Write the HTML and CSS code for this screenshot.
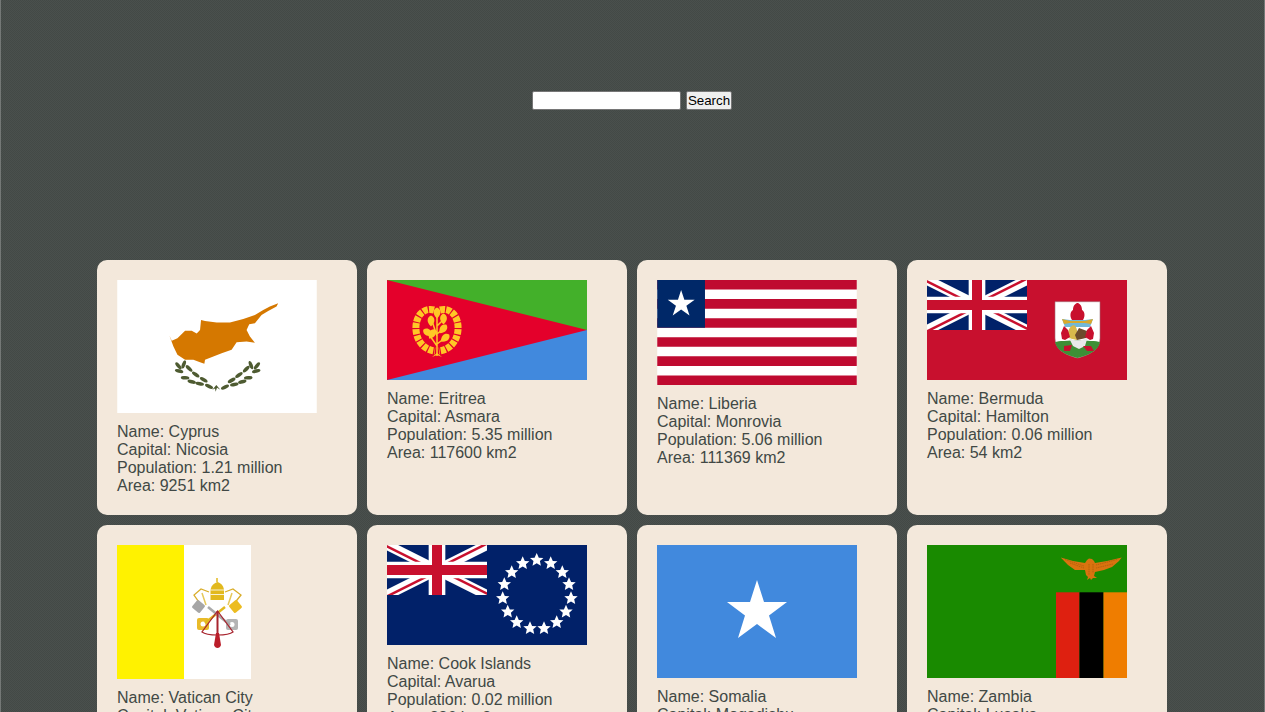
FILE: index.html
```html
<!DOCTYPE html>
<html lang="en">
<head>
<meta charset="utf-8">
<title>Countries</title>
<link rel="stylesheet" href="styles.css">
</head>
<body>
<svg class="defs" width="0" height="0" aria-hidden="true">
  <defs>
    <clipPath id="uj-clip"><path d="M30 15 H60 V30Z V30 H0Z H0 V0Z V0 H60Z"/></clipPath>
    <symbol id="union-jack" viewBox="0 0 60 30" preserveAspectRatio="none">
      <rect width="60" height="30" fill="#012169"/>
      <path d="M0 0 L60 30 M60 0 L0 30" stroke="#fff" stroke-width="6"/>
      <path d="M0 0 L60 30 M60 0 L0 30" stroke="#c8102e" stroke-width="3" clip-path="url(#uj-clip)"/>
      <path d="M30 0 V30 M0 15 H60" stroke="#fff" stroke-width="10"/>
      <path d="M30 0 V30 M0 15 H60" stroke="#c8102e" stroke-width="6"/>
    </symbol>
    <path id="ck-star" d="M0 -7 L2.100 -2.300 L6.700 -2.100 L3.200 1 L4.200 5.700 L0 3.200 L-4.200 5.700 L-3.200 1 L-6.700 -2.100 L-2.100 -2.300Z" fill="#fff"/>
    <ellipse id="cy-leaf" rx="6.500" ry="2.700" fill="#4e5b31"/>
    <path id="er-leaf" d="M0 -5.500 C4 -4 5 1 0 5.500 C-5 1 -4 -4 0 -5.500Z" fill="#ffc726"/>
  </defs>
</svg>
<div class="page">
  <header class="search-area">
    <form class="search-form">
      <input class="search-input" type="text" aria-label="Search">
      <button class="search-button" type="button">Search</button>
    </form>
  </header>
  <main class="grid">

    <article class="card">
      <svg class="flag" width="200" height="133" viewBox="0 0 300 200">
        <rect width="300" height="200" fill="#fff"/>
        <path d="M78.500 84 L82 91.500 L90.500 87.500 L102 76.500 L112 76.500 L119.500 80.500 L124.500 75 L126 60 L132 61.500 L149.500 64 L169.500 64 L189.500 58.500 L207 52.500 L219.500 45 L229.500 40 L242 35 L239.500 40 L227 46.500 L217 52.500 L207 65 L198.500 66.500 L194.500 75 L199.500 85 L207 94.500 L194.500 92.500 L179.500 93.500 L172 105 L157 110 L144.500 115 L132 120 L131 126 L124.500 123.500 L114.500 120 L102 120 L90.500 112.500 L84.500 100Z" fill="#d57800"/>
        <g>
          <use href="#cy-leaf" transform="translate(92 129) rotate(50)"/>
          <use href="#cy-leaf" transform="translate(100 127) rotate(-70)"/>
          <use href="#cy-leaf" transform="translate(93 137) rotate(15)"/>
          <use href="#cy-leaf" transform="translate(108 133) rotate(45)"/>
          <use href="#cy-leaf" transform="translate(102 147) rotate(5)"/>
          <use href="#cy-leaf" transform="translate(118 142) rotate(35)"/>
          <use href="#cy-leaf" transform="translate(112 153) rotate(15)"/>
          <use href="#cy-leaf" transform="translate(130 150) rotate(30)"/>
          <use href="#cy-leaf" transform="translate(124 156) rotate(10)"/>
          <use href="#cy-leaf" transform="translate(138 160) rotate(25)"/>
          <use href="#cy-leaf" transform="translate(210 129) rotate(-50)"/>
          <use href="#cy-leaf" transform="translate(201 128) rotate(70)"/>
          <use href="#cy-leaf" transform="translate(209 137) rotate(-15)"/>
          <use href="#cy-leaf" transform="translate(194 134) rotate(-45)"/>
          <use href="#cy-leaf" transform="translate(197 147) rotate(-5)"/>
          <use href="#cy-leaf" transform="translate(183 143) rotate(-35)"/>
          <use href="#cy-leaf" transform="translate(188 153) rotate(-15)"/>
          <use href="#cy-leaf" transform="translate(172 151) rotate(-30)"/>
          <use href="#cy-leaf" transform="translate(176 157) rotate(-10)"/>
          <use href="#cy-leaf" transform="translate(162 161) rotate(-25)"/>
          <path d="M143 165 L149 158 L155 165 L150 162 L148 168 L147 163Z" fill="#4e5b31"/>
        </g>
      </svg>
      <div class="info">
        <div>Name: Cyprus</div>
        <div>Capital: Nicosia</div>
        <div>Population: 1.21 million</div>
        <div>Area: 9251 km2</div>
      </div>
    </article>

    <article class="card">
      <svg class="flag" width="200" height="100" viewBox="0 0 200 100">
        <rect width="200" height="50" fill="#43b02a"/>
        <rect y="50" width="200" height="50" fill="#4189dd"/>
        <path d="M0 0 L200 50 L0 100Z" fill="#e4002b"/>
        <g fill="none" stroke="#ffc726">
          <path d="M47 30 C36 27 28 37 29 50 C30 62 38 70 48 71" stroke-width="7" stroke-dasharray="5 1.200"/>
          <path d="M53 30 C64 27 72 37 71 50 C70 62 62 70 52 71" stroke-width="7" stroke-dasharray="5 1.200"/>
          <path d="M50 76 V33 M50 66 L41 53 M50 64 L58 58 M50 56 L45 41 M50 54 L56 49 M50 46 L57 39" stroke-width="1.500"/>
        </g>
        <use href="#er-leaf" x="44" y="41"/>
        <use href="#er-leaf" x="56.500" y="39"/>
        <use href="#er-leaf" x="50" y="33"/>
        <use href="#er-leaf" transform="translate(41 52.500) rotate(-60)"/>
        <use href="#er-leaf" transform="translate(45 54) rotate(30)"/>
        <use href="#er-leaf" transform="translate(56 49) rotate(40)"/>
        <use href="#er-leaf" transform="translate(58 58) rotate(50)"/>
        <path d="M45 77 L50 73 L55 77 L50 75Z" fill="#ffc726"/>
      </svg>
      <div class="info">
        <div>Name: Eritrea</div>
        <div>Capital: Asmara</div>
        <div>Population: 5.35 million</div>
        <div>Area: 117600 km2</div>
      </div>
    </article>

    <article class="card">
      <svg class="flag" width="200" height="105" viewBox="0 0 209 110">
        <rect width="209" height="110" fill="#fff"/>
        <path d="M0 5 H209 M0 25 H209 M0 45 H209 M0 65 H209 M0 85 H209 M0 105 H209" stroke="#bf0a30" stroke-width="10"/>
        <rect width="50" height="50" fill="#002868"/>
        <path d="M25 10.500 L28.400 20.700 L39.200 20.700 L30.500 27 L33.800 37.100 L25 30.800 L16.200 37.100 L19.600 27 L11 20.700 L21.700 20.700Z" fill="#fff"/>
      </svg>
      <div class="info">
        <div>Name: Liberia</div>
        <div>Capital: Monrovia</div>
        <div>Population: 5.06 million</div>
        <div>Area: 111369 km2</div>
      </div>
    </article>

    <article class="card">
      <svg class="flag" width="200" height="100" viewBox="0 0 200 100">
        <rect width="200" height="100" fill="#c8102e"/>
        <use href="#union-jack" width="100" height="50"/>
        <path d="M128 21.700 H173 V58 C173 70 162 75 150.500 78 C139 75 128 70 128 58Z" fill="#fff" stroke="#a0707a" stroke-width=".6"/>
        <path d="M128 62 C135 60 166 60 173 62 C171 71 162 75 150.500 78 C139 75 130 71 128 62Z" fill="#3e8f36"/>
        <path d="M135 39 L143 40 H158 L166 39 L163 47 H138Z" fill="#72b8d8"/>
        <path d="M135 39 L143 41 H158 L166 39 L164 44 L158 43 H143 L137 44Z" fill="#d9a92c"/>
        <path d="M145 40 C142 35 144 31 146 30 C146 25 149 23 150.500 23 C152 23 155 25 155 30 C157 31 159 35 156 40Z" fill="#c8102e"/>
        <path d="M141 58 C140 50 143 46 147 45 C150 47 151 52 150 60Z" fill="#d9b84c"/>
        <path d="M148 55 L152 48 L160 51 L159 58 L150 60Z" fill="#6d4a2c"/>
        <path d="M141 56 C145 62 156 62 161 56 L158 66 L152 69 L146 66Z" fill="#e9e9e9"/>
        <path d="M134 53 L137 46 L141 50 L143 57 L138 60 L135 59Z M167 53 L164 46 L160 50 L158 57 L163 60 L166 59Z M137 66 L145 65 L143 71 L137 71Z M156 66 L164 66 L167 71 L160 71Z" fill="#c8102e"/>
      </svg>
      <div class="info">
        <div>Name: Bermuda</div>
        <div>Capital: Hamilton</div>
        <div>Population: 0.06 million</div>
        <div>Area: 54 km2</div>
      </div>
    </article>

    <article class="card">
      <svg class="flag" width="134" height="134" viewBox="0 0 134 134">
        <rect width="67" height="134" fill="#fff200"/>
        <rect x="67" width="67" height="134" fill="#fff"/>
        <path d="M100 33 V37" stroke="#e2b91e" stroke-width="1.500"/>
        <path d="M93.500 55 H107 V46 C107 41 104 38 100.500 37 C97 38 93.500 41 93.500 46Z" fill="#e2b91e"/>
        <path d="M93.500 45 H107 M93.500 49.500 H107" stroke="#fff" stroke-width=".8"/>
        <path d="M92 47 L84 44 L77 50 L84 60 M108 47 L116 44 L124 50 L116 60" fill="none" stroke="#d9ad2a" stroke-width="1.300"/>
        <path d="M85 48 L89 60 M115 48 L111 60" stroke="#e6c85a" stroke-width="1.500"/>
        <rect x="76.500" y="56.500" width="10" height="10" rx="1.500" fill="#a6a6a6" transform="rotate(40 81.500 61.500)"/>
        <rect x="113.500" y="56.500" width="10" height="10" rx="1.500" fill="#ecbc20" transform="rotate(-40 118.500 61.500)"/>
        <rect x="80" y="73" width="12" height="12" rx="2" fill="#e9bb2a"/>
        <rect x="109" y="74" width="12" height="11" rx="2" fill="#b4b4b4"/>
        <circle cx="86" cy="79" r="2.500" fill="#fff"/>
        <circle cx="115" cy="79.500" r="2.500" fill="#fff"/>
        <path d="M88 78 L108 62" stroke="#e2b91e" stroke-width="2.500"/>
        <path d="M91 62 L113 80" stroke="#aaa" stroke-width="2.500"/>
        <path d="M100.500 66 L85 87 C90 91 111 91 116 87 Z" fill="none" stroke="#a8242e" stroke-width="1.200"/>
        <path d="M100.500 66 V90" stroke="#a8242e" stroke-width="2"/>
        <path d="M99 88 H102 L104 100 C103 104 98 104 97 100Z" fill="#bb1e2a"/>
      </svg>
      <div class="info">
        <div>Name: Vatican City</div>
        <div>Capital: Vatican City</div>
        <div>Population: 0 million</div>
        <div>Area: 0.44 km2</div>
      </div>
    </article>

    <article class="card">
      <svg class="flag" width="200" height="100" viewBox="0 0 200 100">
        <rect width="200" height="100" fill="#012169"/>
        <use href="#union-jack" width="100" height="50"/>
        <use href="#ck-star" x="149.700" y="15"/>
        <use href="#ck-star" x="163.700" y="18.300"/>
        <use href="#ck-star" x="175.300" y="27.300"/>
        <use href="#ck-star" x="182" y="39.300"/>
        <use href="#ck-star" x="184" y="53.300"/>
        <use href="#ck-star" x="179" y="66.700"/>
        <use href="#ck-star" x="169.700" y="77.300"/>
        <use href="#ck-star" x="157" y="83.300"/>
        <use href="#ck-star" x="143" y="83.300"/>
        <use href="#ck-star" x="129.700" y="77.300"/>
        <use href="#ck-star" x="120.700" y="66.700"/>
        <use href="#ck-star" x="115.700" y="53.300"/>
        <use href="#ck-star" x="117.300" y="39.300"/>
        <use href="#ck-star" x="124.700" y="27.300"/>
        <use href="#ck-star" x="135.700" y="18.300"/>
      </svg>
      <div class="info">
        <div>Name: Cook Islands</div>
        <div>Capital: Avarua</div>
        <div>Population: 0.02 million</div>
        <div>Area: 236 km2</div>
      </div>
    </article>

    <article class="card">
      <svg class="flag" width="200" height="133" viewBox="0 0 200 133">
        <rect width="200" height="133" fill="#4189dd"/>
        <path d="M100 35 L107 57 L130 57 L112 70.500 L119 93 L100 79 L81 93 L88 70.500 L70 57 L93 57Z" fill="#fff"/>
      </svg>
      <div class="info">
        <div>Name: Somalia</div>
        <div>Capital: Mogadishu</div>
        <div>Population: 15.89 million</div>
        <div>Area: 637657 km2</div>
      </div>
    </article>

    <article class="card">
      <svg class="flag" width="200" height="133" viewBox="0 0 200 133">
        <rect width="200" height="133" fill="#198a00"/>
        <rect x="129" y="47.300" width="23.500" height="85.700" fill="#de2010"/>
        <rect x="152.500" y="47.300" width="24" height="85.700" fill="#000"/>
        <rect x="176.500" y="47.300" width="23.500" height="85.700" fill="#ef7d00"/>
        <path d="M133.700 12.500 L146 16 L158 18 L160 15 L162 13.500 L165 14 L167 16 L168 18 L180 16 L194.700 12.500 L192 16 L185 22 L177 25 L168 27 L167 31 L170 33 L166 33 L164 35 L163 33 L160 35 L161 32 L159 30 L158 25 L148 25 L141 20Z" fill="#d9730f"/>
        <path d="M138 14.500 L157 21 M143 18 L157 23 M190 14.500 L169 20 M186 19 L169 23 M162 19 V30 M166 19 V28" stroke="#a85a0c" stroke-width=".7" stroke-dasharray="1.500 .8" fill="none"/>
      </svg>
      <div class="info">
        <div>Name: Zambia</div>
        <div>Capital: Lusaka</div>
        <div>Population: 18.38 million</div>
        <div>Area: 752612 km2</div>
      </div>
    </article>

  </main>
</div>
</body>
</html>
```

FILE: styles.css
```css
html, body {
  margin: 0;
  padding: 0;
  height: 100%;
  overflow: hidden;
}

body {
  background-color: #464c49;
  background-image:
    linear-gradient(to right, #747876 1px, transparent 1px),
    linear-gradient(to left, #747876 1px, transparent 1px),
    repeating-conic-gradient(#4a504d 0 25%, #434946 0 50%);
  background-size: auto, auto, 2px 2px;
  font-family: "Liberation Sans", Arial, sans-serif;
  color: #414845;
  font-size: 16px;
  line-height: 18px;
}

.defs {
  display: block;
  height: 0;
}

.page {
  width: 1264px;
}

.search-area {
  height: 200px;
  margin-bottom: 60px;
  display: flex;
  justify-content: center;
  align-items: center;
}

.search-form {
  display: flex;
  align-items: center;
  gap: 5px;
}

.search-input {
  box-sizing: border-box;
  width: 149px;
  height: 19px;
  padding: 1px 2px;
  margin: 0;
  border: 1px solid #767676;
  border-radius: 2px;
  background: #fff;
}

.search-button {
  box-sizing: border-box;
  width: 46px;
  height: 19px;
  padding: 0;
  margin: 0;
  border: 1px solid #767676;
  border-radius: 2px;
  background: #efefef;
  color: #000;
  font-family: "Liberation Sans", Arial, sans-serif;
  font-size: 13.33px;
  line-height: 15px;
}

.grid {
  display: grid;
  grid-template-columns: repeat(4, 260px);
  justify-content: center;
  gap: 10px;
}

.card {
  box-sizing: border-box;
  padding: 20px;
  background: #f3e8db;
  border-radius: 10px;
}

.flag {
  display: block;
}

.info {
  margin-top: 10px;
}
```
